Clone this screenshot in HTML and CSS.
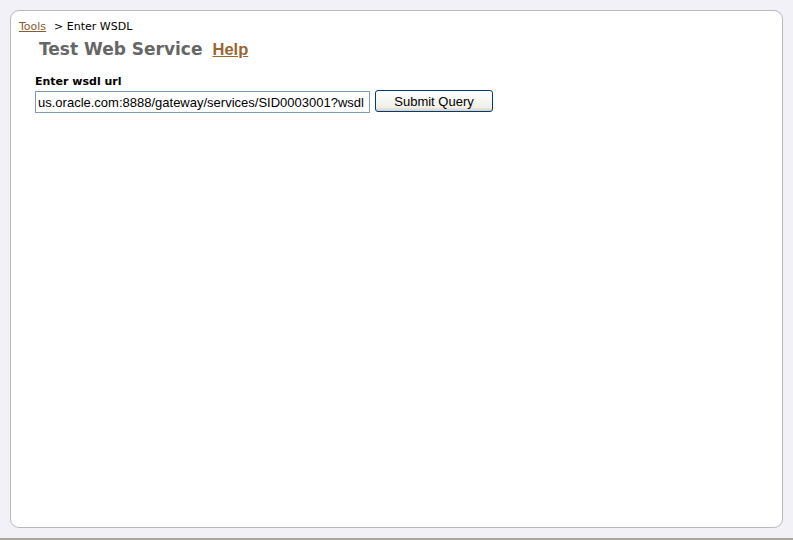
FILE: index.html
```html
<!DOCTYPE html>
<html>
<head>
<meta charset="utf-8">
<link rel="stylesheet" href="styles.css">
</head>
<body>
<div class="page">
  <div class="panel">
    <div class="crumbs"><a href="#" class="crumb-link">Tools</a><span class="crumb-sep">&gt; Enter WSDL</span></div>
    <div class="title-row">
      <h1 class="title">Test Web Service</h1>
      <a href="#" class="help">Help</a>
    </div>
    <form class="wsdl-form">
      <label class="field-label" for="wsdl">Enter wsdl url</label>
      <div class="field-row">
        <input id="wsdl" class="wsdl-input" type="text" value="us.oracle.com:8888/gateway/services/SID0003001?wsdl">
        <button type="button" class="submit">Submit Query</button>
      </div>
    </form>
  </div>
</div>
<div class="statusline"></div>
</body>
</html>
```
FILE: styles.css
```css
html, body {
  margin: 0;
  padding: 0;
}
body {
  background: #f1f1f7;
  width: 793px;
  height: 540px;
  overflow: hidden;
  font-family: "DejaVu Sans", Tahoma, sans-serif;
}
.page {
  height: 538px;
  padding: 10px 10px 0 10px;
  box-sizing: border-box;
}
.panel {
  width: 773px;
  height: 518px;
  box-sizing: border-box;
  background: #ffffff;
  border: 1px solid #b9b9bf;
  border-radius: 9px;
  padding: 9px 8px 0 8px;
}
.statusline {
  height: 2px;
  background: #aca899;
}
.crumbs {
  font-size: 11px;
  line-height: 14px;
  color: #000;
}
.crumb-link {
  color: #8a5a2b;
  text-decoration: underline;
}
.crumb-sep {
  margin-left: 8px;
}
.title-row {
  display: flex;
  align-items: baseline;
  padding-left: 20px;
  margin-top: 3px;
}
.title {
  margin: 0;
  font-size: 17px;
  font-weight: bold;
  color: #666666;
  line-height: 24px;
}
.help {
  font-family: "Liberation Sans", Arial, sans-serif;
  font-size: 16.5px;
  font-weight: bold;
  color: #996633;
  margin-left: 10px;
  text-decoration: underline;
}
.wsdl-form {
  margin: 0;
  padding-left: 16px;
  padding-top: 14px;
}
.field-label {
  display: block;
  font-size: 11px;
  font-weight: bold;
  color: #000;
  line-height: 14px;
}
.field-row {
  display: flex;
  align-items: center;
  margin-top: 2px;
}
.wsdl-input {
  width: 335px;
  height: 22px;
  box-sizing: border-box;
  border: 1px solid #7f9db9;
  padding: 0 2px;
  font-family: "Liberation Sans", Arial, sans-serif;
  font-size: 13px;
  color: #000;
  margin: 0;
  outline: none;
}
.submit {
  margin: 0 0 0 5px;
  width: 118px;
  height: 22px;
  box-sizing: border-box;
  border: 1px solid #003c74;
  border-radius: 3px;
  background: linear-gradient(#ffffff, #f0f0ea 80%, #d6d0c5);
  font-family: "Liberation Sans", Arial, sans-serif;
  font-size: 13px;
  color: #000;
  padding: 0;
  position: relative;
  top: -1px;
}
```
